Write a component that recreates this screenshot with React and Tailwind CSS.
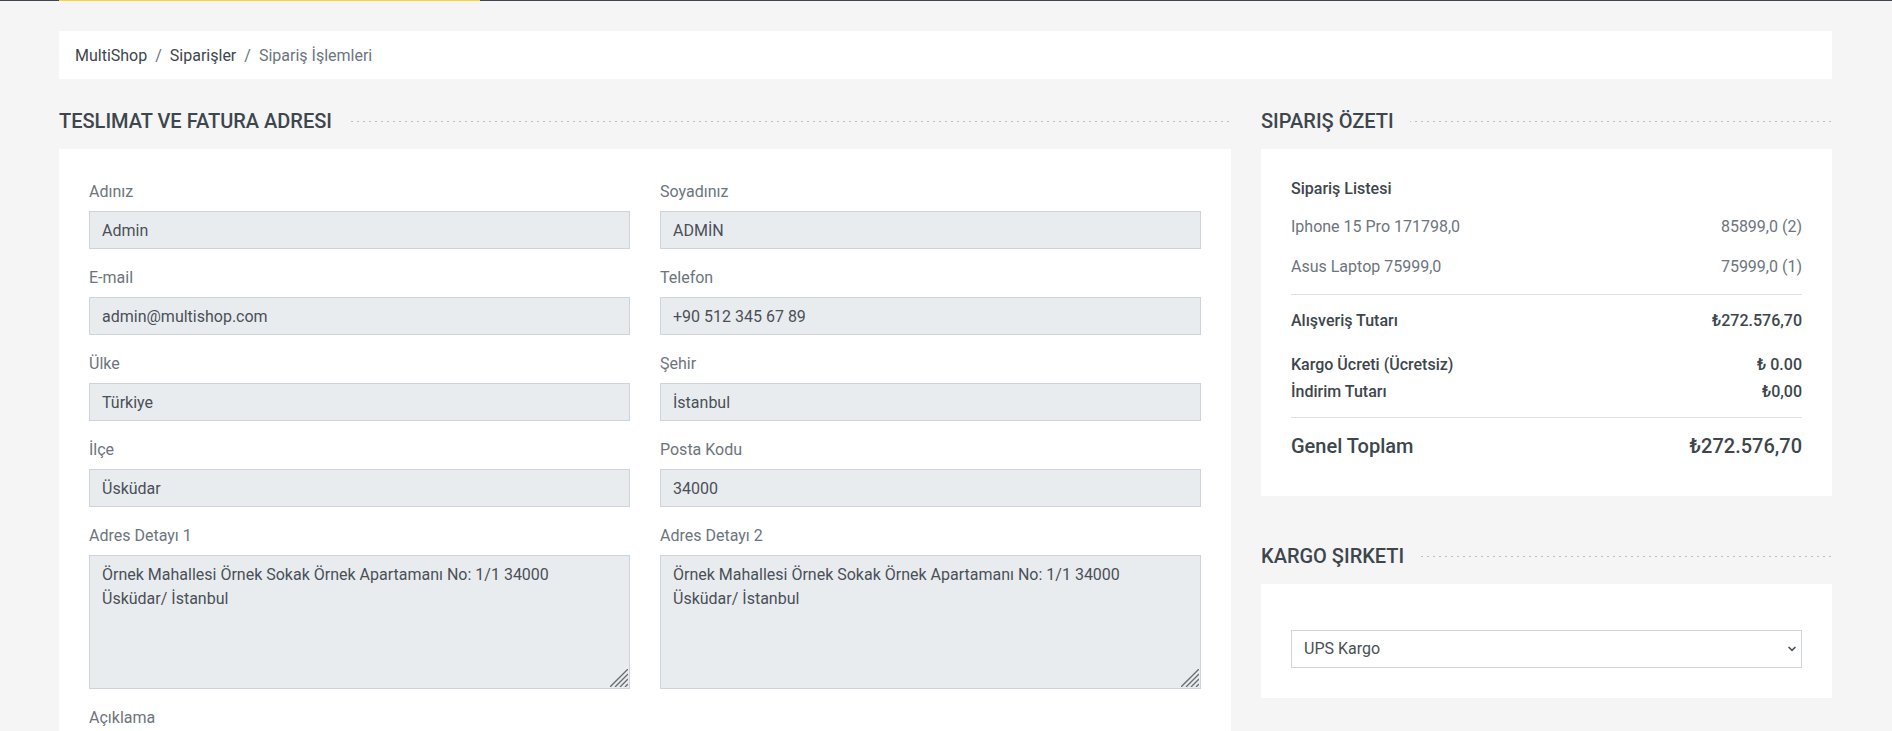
const address = "Örnek Mahallesi Örnek Sokak Örnek Apartamanı No: 1/1 34000 Üsküdar/ İstanbul";

const fields = [
  { id: "name", label: "Adınız", value: "Admin" },
  { id: "surname", label: "Soyadınız", value: "ADMİN" },
  { id: "email", label: "E-mail", value: "admin@multishop.com" },
  { id: "phone", label: "Telefon", value: "+90 512 345 67 89" },
  { id: "country", label: "Ülke", value: "Türkiye" },
  { id: "city", label: "Şehir", value: "İstanbul" },
  { id: "district", label: "İlçe", value: "Üsküdar" },
  { id: "zip", label: "Posta Kodu", value: "34000" },
];

const products = [
  { name: "Iphone 15 Pro 171798,0", price: "85899,0 (2)" },
  { name: "Asus Laptop 75999,0", price: "75999,0 (1)" },
];

function SectionTitle({ children }) {
  return (
    <h5 className="mb-4 grid items-center text-xl leading-6 font-medium text-[#3d464d]">
      <span className="col-start-1 row-start-1 h-px bg-[repeating-linear-gradient(90deg,transparent_0_4px,#bfbfbf_4px_6px)]" />
      <span className="z-10 col-start-1 row-start-1 justify-self-start bg-[#f5f5f5] pr-4">{children}</span>
    </h5>
  );
}

function Label({ id, children }) {
  return (
    <label htmlFor={id} className="mb-[6px] block leading-[26px]">
      {children}
    </label>
  );
}

function Field({ id, label, value }) {
  return (
    <div>
      <Label id={id}>{label}</Label>
      <input
        id={id}
        defaultValue={value}
        readOnly
        className="block h-[38px] w-full border border-[#ced4da] bg-[#e9ecef] px-3 text-[#495057] outline-none"
      />
    </div>
  );
}

function AreaField({ id, label, value, className }) {
  return (
    <div className={className}>
      <Label id={id}>{label}</Label>
      <div className="relative">
        <textarea
          id={id}
          rows={5}
          defaultValue={value}
          readOnly
          className="block w-full resize-none border border-[#ced4da] bg-[#e9ecef] px-3 pt-[7px] pb-[5px] text-[#495057] outline-none"
        />
        <svg
          className="pointer-events-none absolute right-[2px] bottom-[2px] size-[18px]"
          viewBox="0 0 18 18"
          fill="none"
          stroke="#6b6e71"
          strokeWidth="1.4"
        >
          <path d="M0 18 18 0M5 18 18 5M10 18l8-8M15 18l3-3" />
        </svg>
      </div>
    </div>
  );
}

function TotalRow({ label, value, className }) {
  return (
    <div className={"flex justify-between font-medium text-[#3d464d] " + className}>
      <h6>{label}</h6>
      <span>{value}</span>
    </div>
  );
}

export default function App() {
  return (
    <div className="min-h-screen bg-[#f5f5f5] pb-12 font-[Roboto,sans-serif] text-base leading-6 text-[#6c757d]">
      <div className="bg-[#3d464d] pr-[60px] pl-[59px]">
        <div className="grid grid-cols-4 gap-[30px]">
          <div className="h-px bg-[#ffd333]" />
        </div>
      </div>

      <div className="pt-[30px] pr-[60px] pl-[59px]">
        <nav className="mb-[30px] flex gap-2 bg-white px-4 pt-3 pb-[10px] leading-[26px]">
          <a href="#home" className="text-[#3d464d]">MultiShop</a>
          <span>/</span>
          <a href="#orders" className="text-[#3d464d]">Siparişler</a>
          <span>/</span>
          <span>Sipariş İşlemleri</span>
        </nav>

        <div className="grid grid-cols-3 items-start gap-[30px]">
          <section className="col-span-2">
            <SectionTitle>TESLIMAT VE FATURA ADRESI</SectionTitle>
            <form className="grid grid-cols-2 gap-x-[30px] gap-y-4 bg-white p-[30px]">
              {fields.map((f) => (
                <Field key={f.id} {...f} />
              ))}
              <AreaField id="address1" label="Adres Detayı 1" value={address} />
              <AreaField id="address2" label="Adres Detayı 2" value={address} />
              <AreaField id="note" label="Açıklama" value="" className="col-span-2" />
            </form>
          </section>

          <aside>
            <SectionTitle>SIPARIŞ ÖZETI</SectionTitle>
            <div className="mb-12 bg-white p-[30px]">
              <div className="border-b border-[#dee2e6] pb-[14px]">
                <h6 className="mb-4 leading-[19px] font-medium text-[#3d464d]">Sipariş Listesi</h6>
                <div className="flex flex-col gap-[14px] leading-[26px]">
                  {products.map((p) => (
                    <div key={p.name} className="flex justify-between">
                      <p>{p.name}</p>
                      <p>{p.price}</p>
                    </div>
                  ))}
                </div>
              </div>
              <div className="border-b border-[#dee2e6] py-4">
                <TotalRow label="Alışveriş Tutarı" value="₺272.576,70" className="mb-[25px] leading-[19px]" />
                <TotalRow label="Kargo Ücreti (Ücretsiz)" value="₺ 0.00" className="mb-2 leading-[19px]" />
                <TotalRow label="İndirim Tutarı" value="₺0,00" className="leading-[19px]" />
              </div>
              <TotalRow label="Genel Toplam" value="₺272.576,70" className="pt-4 pb-2 text-xl leading-6" />
            </div>

            <SectionTitle>KARGO ŞIRKETI</SectionTitle>
            <div className="bg-white px-[30px] pt-[46px] pb-[30px]">
              <div className="relative">
                <select
                  aria-label="Kargo Şirketi"
                  className="block h-[38px] w-full appearance-none border border-[#ced4da] bg-white px-3 text-[#495057] outline-none"
                >
                  <option>UPS Kargo</option>
                </select>
                <svg
                  className="pointer-events-none absolute top-4 right-[6px] h-[6px] w-2"
                  viewBox="0 0 8 6"
                  fill="none"
                  stroke="#495057"
                  strokeWidth="1.6"
                >
                  <path d="M.6 1 4 4.4 7.4 1" />
                </svg>
              </div>
            </div>
          </aside>
        </div>
      </div>
    </div>
  );
}
